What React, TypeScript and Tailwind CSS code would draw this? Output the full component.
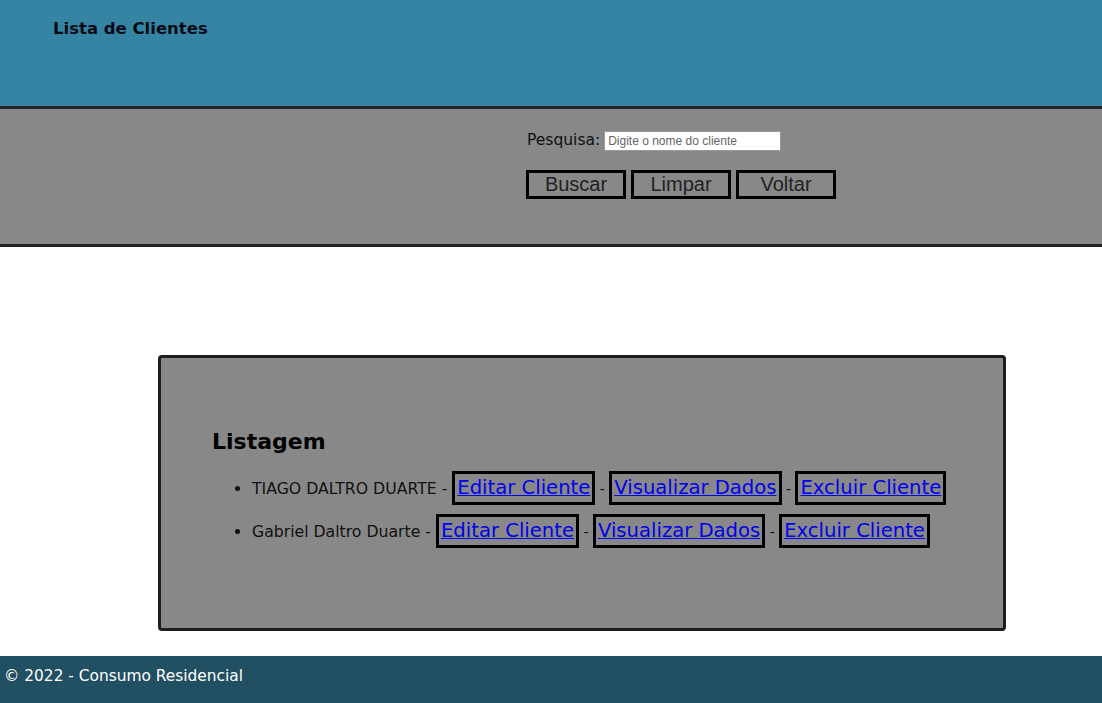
import React from "react";

const clientes = ["TIAGO DALTRO DUARTE", "Gabriel Daltro Duarte"];

const acoes = ["Editar Cliente", "Visualizar Dados", "Excluir Cliente"];

function LinkBox({ label }: { label: string }) {
  return (
    <a
      href="#"
      className="inline-block border-[3px] border-black px-[2px] text-[19.6px] leading-[28px] text-[#0000ee] underline"
    >
      {label}
    </a>
  );
}

export default function App() {
  return (
    <div className="min-h-screen bg-white font-['DejaVu_Sans',sans-serif] text-black">
      {/* Header */}
      <header className="h-[109px] border-b-[3px] border-[#222] bg-[#3584a4] pl-[53px] pt-[18px]">
        <h1 className="text-[16.5px] font-bold leading-[22px] text-[#0a0a14]">
          Lista de Clientes
        </h1>
      </header>

      {/* Pesquisa */}
      <section className="h-[138px] border-b-[3px] border-[#222] bg-[#888888] pl-[526px] pt-[20px]">
        <div className="flex items-center">
          <label className="pl-[1px] text-[15.5px] text-[#111]">Pesquisa:</label>
          <input
            type="text"
            placeholder="Digite o nome do cliente"
            className="ml-[4px] h-[20px] w-[177px] border border-[#999] bg-white px-[3px] font-['Liberation_Sans',sans-serif] text-[12px] placeholder:text-[#666]"
          />
        </div>
        <div className="mt-[18px] flex gap-[5px] font-['Liberation_Sans',sans-serif]">
          {["Buscar", "Limpar", "Voltar"].map((b) => (
            <button
              key={b}
              type="button"
              className="h-[29px] w-[100px] border-[3px] border-black text-[20px] leading-[23px] text-[#222]"
            >
              {b}
            </button>
          ))}
        </div>
      </section>

      {/* Listagem */}
      <main className="pt-[108px]">
        <div className="ml-[158px] h-[276px] w-[848px] rounded-[4px] border-[3px] border-[#1e1e1e] bg-[#888888] pl-[51px] pt-[69px]">
          <h2 className="text-[22px] font-bold leading-[30px]">Listagem</h2>
          <ul className="mt-[14px] list-disc pl-[40px]">
            {clientes.map((c) => (
              <li key={c} className="mb-[8px] text-[15.7px] leading-[34px] text-[#111]">
                {c} -{" "}
                {acoes.map((a, i) => (
                  <React.Fragment key={a}>
                    <LinkBox label={a} />
                    {i < acoes.length - 1 && <span className="text-[14px]"> - </span>}
                  </React.Fragment>
                ))}
              </li>
            ))}
          </ul>
        </div>
      </main>

      {/* Footer */}
      <footer className="mt-[25px] h-[47px] bg-[#215062] pl-[4px] pt-[9px] text-[15.4px] leading-[22px] text-white">
        © 2022 - Consumo Residencial
      </footer>
    </div>
  );
}
